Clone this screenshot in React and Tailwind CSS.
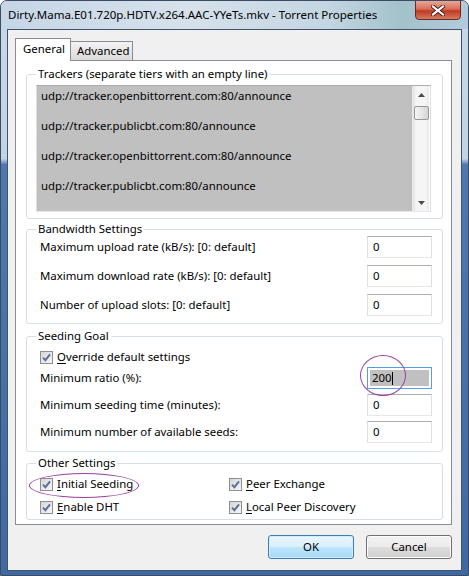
import React from 'react';

const TRACKERS = [
  'udp://tracker.openbittorrent.com:80/announce',
  'udp://tracker.publicbt.com:80/announce',
  'udp://tracker.openbittorrent.com:80/announce',
  'udp://tracker.publicbt.com:80/announce',
];

function Check() {
  return (
    <span className="w-[13px] h-[13px] shrink-0 border border-[#8e8f8f] bg-[linear-gradient(135deg,#d6d6d6,#f6f6f6)] flex items-center justify-center">
      <svg viewBox="0 0 11 11" className="w-[11px] h-[11px]">
        <path d="M2 5.6 L4.4 8.2 L9 2.4" fill="none" stroke="#5b6d98" strokeWidth="1.9" />
      </svg>
    </span>
  );
}

function CheckRow({ mnemonic, rest }) {
  return (
    <label className="flex items-center gap-[4px] h-[16px] leading-[16px]">
      <Check />
      <span>
        <span className="underline underline-offset-[2px]">{mnemonic}</span>
        {rest}
      </span>
    </label>
  );
}

function TextBox({ value }) {
  return (
    <div className="w-[65px] h-[22px] border border-[#abadb3] border-b-[#e3e9ef] border-x-[#dbdfe6] bg-white pl-[5px] leading-[20px]">
      {value}
    </div>
  );
}

function Row({ label, children }) {
  return (
    <div className="flex items-center justify-between h-[22px]">
      <span>{label}</span>
      {children}
    </div>
  );
}

// legend is placed inside the fieldset padding, so its margin offsets that padding
function Group({ title, className, legendClass, children }) {
  return (
    <fieldset className={`border border-[#d5dfe5] rounded-[3px] ${className}`}>
      <legend className={`px-[2px] leading-[14px] ${legendClass}`}>{title}</legend>
      {children}
    </fieldset>
  );
}

function Trackers() {
  return (
    <div className="h-[127px] border border-[#abadb3] border-b-[#e3e9ef] border-x-[#dbdfe6] flex bg-white pr-px">
      <div className="flex-1 bg-[#c0c0c0] overflow-hidden pt-[2px] pl-[4px] leading-[15px]">
        {TRACKERS.map((t, i) => (
          <React.Fragment key={i}>
            <div>{t}</div>
            <div>&nbsp;</div>
          </React.Fragment>
        ))}
      </div>
      <div className="w-[17px] flex flex-col items-center bg-[linear-gradient(90deg,#e3e3e3,#f5f5f5_20%,#f5f5f5_80%,#e8e8e8)] border-l border-[#e8e8e8]">
        <div className="h-[17px] flex items-center justify-center">
          <svg width="7" height="4" viewBox="0 0 7 4"><path d="M3.5 0 L7 4 L0 4 Z" fill="#4a4a4a" /></svg>
        </div>
        <div className="mt-[3px] w-[15px] h-[14px] rounded-[2px] border border-[#979797] bg-[linear-gradient(90deg,#f4f4f4,#e6e6e6_50%,#d4d4d4)]" />
        <div className="flex-1" />
        <div className="h-[17px] flex items-center justify-center">
          <svg width="7" height="4" viewBox="0 0 7 4"><path d="M0 0 L7 0 L3.5 4 Z" fill="#4a4a4a" /></svg>
        </div>
      </div>
    </div>
  );
}

function Ellipse({ className }) {
  return <span className={`absolute rounded-[50%] border border-[#9b3f9e] pointer-events-none ${className}`} />;
}

export default function App() {
  return (
    <div className="w-[469px] h-[576px] flex flex-col rounded-t-[7px] border border-[#3b4b63] bg-[linear-gradient(180deg,#c9d8e8_0%,#c2d3e4_27.5%,#4f78ae_28.5%,#3f69a0_100%)] text-[11.4px] text-black font-['Segoe_UI','Noto_Sans',sans-serif] overflow-hidden select-none">
      <div className="h-[28px] flex items-start bg-[linear-gradient(90deg,#c6d6e7_0%,#d6e1eb_40%,#c3d6e2_70%,#a2c2ca_86%,#b3cbdc_100%)]">
        <div className="pl-[7px] pt-[6px] leading-[16px] text-[11.5px] whitespace-nowrap">
          Dirty.Mama.E01.720p.HDTV.x264.AAC-YYeTs.mkv - Torrent Properties
        </div>
        <div className="ml-auto mr-[7px] -mt-px w-[46px] h-[20px] rounded-b-[4px] border border-[#6b2a22] bg-[linear-gradient(180deg,#e9a897_0%,#d86e58_45%,#c2381f_55%,#d47a62_100%)] flex items-center justify-center">
          <svg width="14" height="11" viewBox="0 0 14 11">
            <path d="M2 1.5 L12 9.5 M12 1.5 L2 9.5" stroke="#4a1a14" strokeWidth="4" strokeLinecap="square" />
            <path d="M2 1.5 L12 9.5 M12 1.5 L2 9.5" stroke="#ffffff" strokeWidth="2.2" strokeLinecap="square" />
          </svg>
        </div>
      </div>

      <div className="flex-1 mx-[6px] mb-[4px] border border-[#42526b] bg-[#f0f0f0] pl-[7px] pr-[9px] pt-[8px] flex flex-col">
        <div className="flex items-end h-[22px]">
          <div className="relative z-10 -mb-px w-[56px] h-[23px] border border-b-0 border-[#898c95] bg-white pl-[7px] leading-[20px]">
            General
          </div>
          <div className="-ml-px w-[63px] h-[19px] border border-b-0 border-[#898c95] bg-[linear-gradient(180deg,#f3f3f3,#e6e6e6_50%,#dcdcdc)] pl-[6px] leading-[18px]">
            Advanced
          </div>
        </div>

        <div className="h-[465px] border border-[#898c95] bg-white pt-[6px] pl-[10px] pr-[8px] flex flex-col">
          <Group
            title="Trackers (separate tiers with an empty line)"
            className="pt-[4px] pb-[6px] pl-[9px] pr-[11px]"
            legendClass="ml-0"
          >
            <Trackers />
          </Group>

          <Group title="Bandwidth Settings" className="mt-[3px] pb-[7px] pl-[13px] pr-[10px]" legendClass="-ml-[4px]">
            <div className="flex flex-col gap-[7px]">
              <Row label="Maximum upload rate (kB/s): [0: default]"><TextBox value="0" /></Row>
              <Row label="Maximum download rate (kB/s): [0: default]"><TextBox value="0" /></Row>
              <Row label="Number of upload slots: [0: default]"><TextBox value="0" /></Row>
            </div>
          </Group>

          <Group title="Seeding Goal" className="mt-[5px] pt-[6px] pb-[8px] pl-[13px] pr-[10px]" legendClass="-ml-[4px]">
            <CheckRow mnemonic="O" rest="verride default settings" />
            <div className="mt-[2px] flex flex-col gap-[5px]">
              <Row label="Minimum ratio (%):">
                <div className="relative w-[65px] h-[22px] border border-[#569de5] bg-white p-[2px]">
                  <div className="h-full bg-[#c0c0c0] pl-[2px] leading-[16px] flex items-center">
                    200<span className="w-px h-[13px] bg-black" />
                  </div>
                  <Ellipse className="-left-[8px] -top-[13px] w-[46px] h-[41px]" />
                </div>
              </Row>
              <Row label="Minimum seeding time (minutes):"><TextBox value="0" /></Row>
              <Row label="Minimum number of available seeds:"><TextBox value="0" /></Row>
            </div>
          </Group>

          <Group title="Other Settings" className="mt-[4px] pt-[6px] pb-[4px] pl-[13px]" legendClass="-ml-[4px]">
            <div className="grid grid-cols-[189px_1fr] gap-y-[7px]">
              <div className="relative">
                <CheckRow mnemonic="I" rest="nitial Seeding" />
                <Ellipse className="-left-[11px] -top-[3px] w-[110px] h-[25px]" />
              </div>
              <CheckRow mnemonic="P" rest="eer Exchange" />
              <CheckRow mnemonic="E" rest="nable DHT" />
              <CheckRow mnemonic="L" rest="ocal Peer Discovery" />
            </div>
          </Group>
        </div>

        <div className="mt-[10px] flex justify-end gap-[12px]">
          <button className="w-[86px] h-[24px] rounded-[3px] border border-[#3c7fb1] bg-[linear-gradient(180deg,#eaf6fd_0%,#d9f0fc_50%,#bee6fd_51%,#a7d9f5_100%)] shadow-[inset_0_0_0_1px_#cfeefd]">
            OK
          </button>
          <button className="w-[86px] h-[24px] rounded-[3px] border border-[#707070] bg-[linear-gradient(180deg,#f2f2f2_0%,#ebebeb_50%,#dddddd_51%,#cfcfcf_100%)] shadow-[inset_0_0_0_1px_#fcfcfc]">
            Cancel
          </button>
        </div>
      </div>
    </div>
  );
}
